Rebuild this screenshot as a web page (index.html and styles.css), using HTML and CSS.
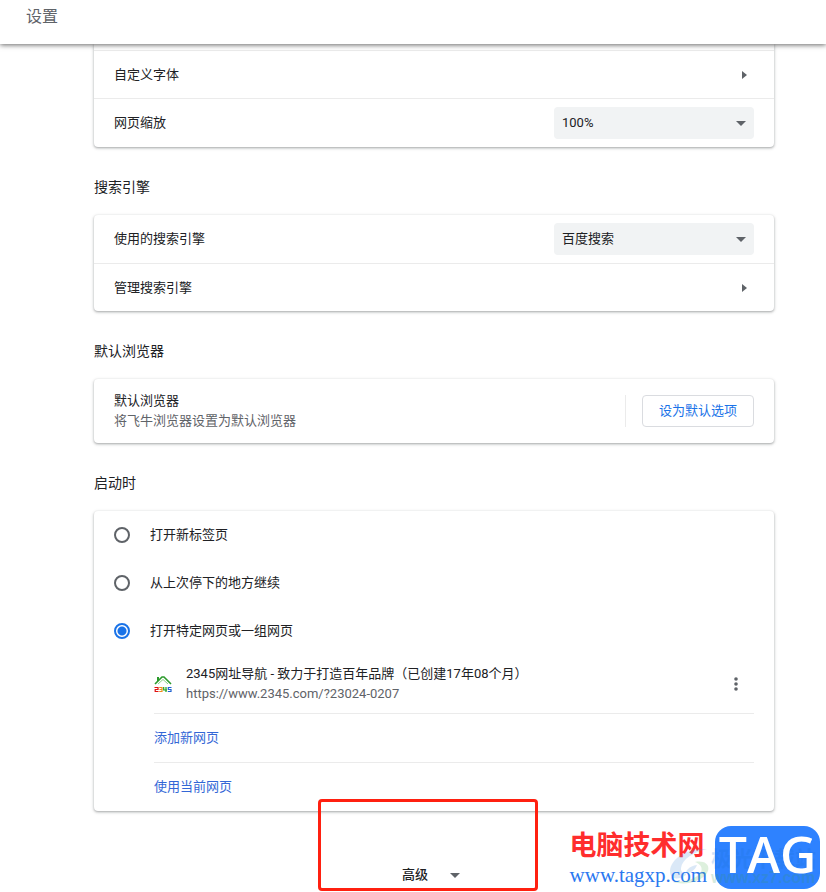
FILE: index.html
```
<!DOCTYPE html>
<html lang="zh-CN">
<head>
    <meta charset="UTF-8">
    <meta name="viewport" content="width=device-width, initial-scale=1.0">
    <title>设置</title>
    <link rel="stylesheet" href="styles.css">
</head>
<body>
    <header class="toolbar">
        <h1>设置</h1>
    </header>

    <main class="content">
        <!-- Appearance -->
        <section class="card first-card">
            <button type="button" class="row link-row">
                <span>自定义字体</span>
                <svg class="arrow-right" width="5" height="8" viewBox="0 0 5 8"><path d="M0 0L5 4L0 8Z" fill="#5f6368"/></svg>
            </button>
            <div class="row">
                <label for="zoom">网页缩放</label>
                <div class="select-wrap">
                    <select id="zoom">
                        <option>100%</option>
                    </select>
                    <svg class="arrow-down" width="10" height="5" viewBox="0 0 10 5"><path d="M0 0H10L5 5Z" fill="#5f6368"/></svg>
                </div>
            </div>
        </section>

        <!-- Search engine -->
        <h2>搜索引擎</h2>
        <section class="card">
            <div class="row">
                <label for="engine">使用的搜索引擎</label>
                <div class="select-wrap">
                    <select id="engine">
                        <option>百度搜索</option>
                    </select>
                    <svg class="arrow-down" width="10" height="5" viewBox="0 0 10 5"><path d="M0 0H10L5 5Z" fill="#5f6368"/></svg>
                </div>
            </div>
            <button type="button" class="row link-row">
                <span>管理搜索引擎</span>
                <svg class="arrow-right" width="5" height="8" viewBox="0 0 5 8"><path d="M0 0L5 4L0 8Z" fill="#5f6368"/></svg>
            </button>
        </section>

        <!-- Default browser -->
        <h2>默认浏览器</h2>
        <section class="card">
            <div class="row two-line">
                <div class="text">
                    <div>默认浏览器</div>
                    <div class="secondary">将飞牛浏览器设置为默认浏览器</div>
                </div>
                <div class="action">
                    <button type="button" class="outline-button">设为默认选项</button>
                </div>
            </div>
        </section>

        <!-- On startup -->
        <h2>启动时</h2>
        <section class="card">
            <label class="radio-row">
                <input type="radio" name="startup">
                <span>打开新标签页</span>
            </label>
            <label class="radio-row">
                <input type="radio" name="startup">
                <span>从上次停下的地方继续</span>
            </label>
            <label class="radio-row">
                <input type="radio" name="startup" checked>
                <span>打开特定网页或一组网页</span>
            </label>
            <div class="pages">
                <div class="page-item">
                    <svg class="favicon" width="18" height="18" viewBox="0 0 18 18">
                        <path d="M3 2H5V6H3Z" fill="#2b9a2b"/>
                        <path d="M1 9L8 2L10 2L17 9" fill="none" stroke="#2b9a2b" stroke-width="1.6"/>
                        <path d="M4 9L9 4.500L14 9" fill="none" stroke="#8ccf86" stroke-width="1"/>
                        <g fill="none" stroke-width="1.2">
                            <path d="M0.500 12.500H4V14.500H1.200V16.500H4.500" stroke="#e01010"/>
                            <path d="M5.200 12.500H8V16.500H5.200M5.500 14.500H8" stroke="#f08c1a"/>
                            <path d="M9.700 12V15H13M12 12V17" stroke="#1ca01c"/>
                            <path d="M17.500 12.500H14.300V14.500H17V16.500H13.800" stroke="#1e62d0"/>
                        </g>
                    </svg>
                    <div class="text">
                        <div>2345网址导航 - 致力于打造百年品牌（已创建17年08个月）</div>
                        <div class="secondary">https://www.2345.com/?23024-0207</div>
                    </div>
                    <button type="button" class="menu-button" aria-label="更多操作">
                        <svg width="4" height="14" viewBox="0 0 4 14" fill="#5f6368"><circle cx="2" cy="2" r="1.8"/><circle cx="2" cy="7" r="1.8"/><circle cx="2" cy="12" r="1.8"/></svg>
                    </button>
                </div>
                <a href="#" class="page-link">添加新网页</a>
                <a href="#" class="page-link">使用当前网页</a>
            </div>
        </section>

        <div class="advanced">
            <button type="button" class="advanced-button">
                <span>高级</span>
                <svg width="10" height="5" viewBox="0 0 10 5"><path d="M0 0H10L5 5Z" fill="#5f6368"/></svg>
            </button>
            <div class="highlight"></div>
        </div>
    </main>

    <!-- Site marks over the bottom corner -->
    <div class="site-mark">
        <div class="site-text">
            <div class="site-name">电脑技术网</div>
            <div class="site-url">www.tagxp.com</div>
        </div>
        <div class="site-tag"><span>TAG</span></div>
        <div class="download-mark">
            <svg width="42" height="36" viewBox="0 0 42 36">
                <path d="M1 23C2 10 18 0 38 1C25 4 13 11 12 20C11 28 24 27 28 17C20 18 16 23 17 27C8 33 1 31 1 23Z" fill="#4a90d9"/>
                <path d="M26 14C37 12 42 18 38 25C33 33 17 38 4 34C17 34 29 30 32 24C34 19 31 16 26 14Z" fill="#5cb85c"/>
            </svg>
            <div class="download-text">
                <div class="download-name">极光下载站</div>
                <div class="download-url">www.xz7.com</div>
            </div>
        </div>
    </div>
</body>
</html>
```

FILE: styles.css
```
* {
    box-sizing: border-box;
}

body {
    margin: 0;
    min-height: 100vh;
    overflow: hidden;
    position: relative;
    background: #fff;
    color: #202124;
    font-family: Roboto, "Noto Sans CJK SC", sans-serif;
    font-size: 13px;
    line-height: 20px;
}

button, select {
    font: inherit;
    color: inherit;
}

.toolbar {
    position: relative;
    z-index: 1;
    height: 44px;
    padding: 5px 26px;
    background: #fff;
    box-shadow: 0 1px 5px rgba(0, 0, 0, 0.6);
}

h1 {
    margin: 0;
    font-size: 16px;
    font-weight: 400;
    line-height: 24px;
    color: #5f6368;
}

.content {
    padding: 0 52px 0 94px;
}

h2 {
    margin: 0;
    padding: 28px 0 16px;
    font-size: 14px;
    font-weight: 400;
    line-height: 24px;
}

.card {
    border-radius: 4px;
    box-shadow: 0 1px 2px rgba(60, 64, 67, 0.3), 0 1px 3px 1px rgba(60, 64, 67, 0.15);
}

.first-card {
    padding-top: 6px;
    border-radius: 0 0 4px 4px;
}

.row {
    display: flex;
    align-items: center;
    justify-content: space-between;
    width: 100%;
    min-height: 48px;
    padding: 0 20px;
}

.row + .row {
    border-top: 1px solid #ebebeb;
}

.first-card .row:first-child {
    border-top: 1px solid #ebebeb;
}

.first-card .row:last-child {
    min-height: 49px;
}

.link-row {
    border: 0;
    background: none;
    text-align: left;
    cursor: pointer;
}

.arrow-right {
    margin-right: 7px;
}

.select-wrap {
    position: relative;
    width: 200px;
}

.select-wrap select {
    display: block;
    appearance: none;
    width: 100%;
    height: 32px;
    padding: 0 24px 0 8px;
    border: 0;
    border-radius: 4px;
    background: #f1f3f4;
}

.arrow-down {
    position: absolute;
    top: 14px;
    right: 8px;
    pointer-events: none;
}

.two-line {
    min-height: 64px;
}

.secondary {
    color: #5f6368;
}

.action {
    padding-left: 16px;
    border-left: 1px solid #ebebeb;
}

.outline-button {
    display: block;
    height: 32px;
    padding: 0 16px;
    border: 1px solid #dadce0;
    border-radius: 4px;
    background: #fff;
    color: #1a73e8;
    cursor: pointer;
}

.radio-row {
    display: flex;
    align-items: center;
    gap: 20px;
    height: 48px;
    padding: 0 20px;
}

.radio-row input {
    appearance: none;
    width: 16px;
    height: 16px;
    margin: 0;
    border: 2px solid #5f6368;
    border-radius: 50%;
}

.radio-row input:checked {
    border-color: #1a73e8;
    background: radial-gradient(circle, #1a73e8 4px, #fff 5px);
}

.pages {
    padding: 0 20px 0 60px;
}

.page-item {
    display: flex;
    align-items: center;
    height: 58px;
}

.favicon {
    margin-right: 14px;
}

.page-item .text {
    flex: 1;
}

.menu-button {
    display: flex;
    align-items: center;
    justify-content: center;
    width: 36px;
    height: 36px;
    padding: 0;
    border: 0;
    background: none;
}

.page-link {
    display: block;
    padding: 14px 0;
    border-top: 1px solid #ebebeb;
    color: #3367d6;
    text-decoration: none;
}

.advanced {
    position: relative;
    display: flex;
    justify-content: center;
    padding: 48px 6px 0 0;
}

.advanced-button {
    display: flex;
    align-items: center;
    gap: 22px;
    height: 32px;
    padding: 0 8px;
    border: 0;
    background: none;
    font-weight: 500;
}

/* Red frame round the advanced button */
.highlight {
    position: absolute;
    top: -12px;
    left: 50%;
    width: 220px;
    height: 92px;
    margin-left: -116px;
    border: 3px solid #ff2010;
    border-radius: 4px;
    pointer-events: none;
}

.site-mark {
    position: absolute;
    right: 6px;
    bottom: 3px;
    display: flex;
    gap: 8px;
    pointer-events: none;
}

.site-name {
    color: #ff2d2d;
    font-family: "Noto Sans CJK SC", sans-serif;
    font-size: 27px;
    font-weight: 700;
    line-height: 36px;
}

.site-url {
    color: #2b78f0;
    font-family: "Liberation Serif", serif;
    font-size: 21px;
    line-height: 26px;
}

.site-tag {
    width: 105px;
    height: 63px;
    border-radius: 16px;
    background: #2e82ff;
    color: #fff;
    font-family: "Open Sans", sans-serif;
    font-size: 50px;
    font-weight: 600;
    line-height: 56px;
    text-align: center;
}

.site-tag span {
    position: relative;
    z-index: 1;
}

.download-mark {
    position: absolute;
    right: 4px;
    bottom: 2px;
    display: flex;
    align-items: center;
    opacity: 0.2;
}

.download-name {
    color: #1a6fd0;
    font-family: "Noto Sans CJK SC", sans-serif;
    font-size: 21px;
    font-weight: 700;
    line-height: 24px;
}

.download-url {
    color: #3a9a5a;
    font-family: "Liberation Sans", sans-serif;
    font-size: 16px;
    font-weight: 700;
    line-height: 18px;
}
```
